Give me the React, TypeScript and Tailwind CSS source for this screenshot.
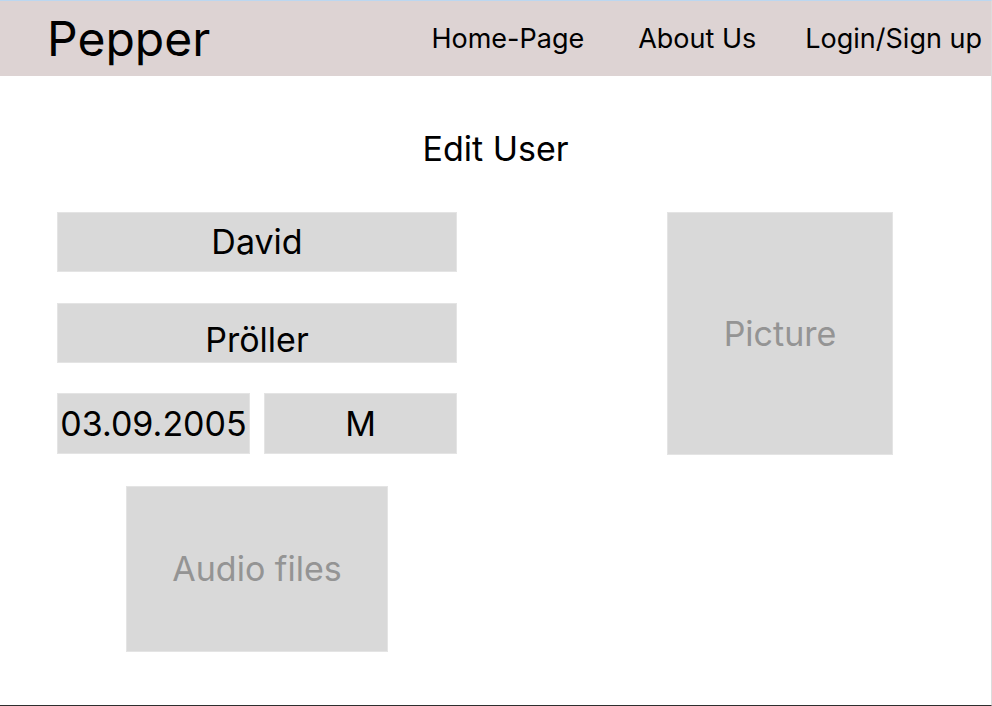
import React from "react";

const font = { fontFamily: "Inter, 'Noto Sans', sans-serif" };

function Box({ className, children }: { className: string; children?: React.ReactNode }) {
  return (
    <div className={`flex items-center justify-center bg-[#d9d9d9] border border-[#e4e4e4] leading-none ${className}`}>
      {children}
    </div>
  );
}

export default function App() {
  return (
    <div
      style={font}
      className="w-[992px] h-[706px] bg-white border-t border-t-[#bcd7f0] border-r border-r-[#dcdcdc] border-b border-b-[#2e2e2e] flex flex-col overflow-hidden text-black"
    >
      <header className="h-[75px] bg-[#ddd3d3] flex items-center shrink-0">
        <div className="ml-[47px] text-[48px] leading-none">Pepper</div>
        <nav className="ml-auto flex items-center text-[27px] leading-none pr-[9px]">
          <span>Home-Page</span>
          <span className="ml-[54px]">About Us</span>
          <span className="ml-[49px]">Login/Sign up</span>
        </nav>
      </header>

      <div className="text-center text-[34px] leading-none mt-[56px]">Edit User</div>

      <div className="flex mt-[46px] pl-[57px]">
        <div className="flex flex-col w-[400px]">
          <Box className="h-[60px] text-[34px]">David</Box>
          <Box className="h-[60px] mt-[31px] text-[34px] pt-[14px]">Pröller</Box>
          <div className="flex mt-[30px] h-[61px] gap-[14px]">
            <Box className="w-[193px] text-[34px]">03.09.2005</Box>
            <Box className="flex-1 text-[34px]">M</Box>
          </div>
          <Box className="ml-[69px] mt-[32px] w-[262px] h-[166px] text-[34px] text-[#949494]">Audio files</Box>
        </div>
        <Box className="ml-[210px] w-[226px] h-[243px] text-[34px] text-[#949494]">Picture</Box>
      </div>
    </div>
  );
}
